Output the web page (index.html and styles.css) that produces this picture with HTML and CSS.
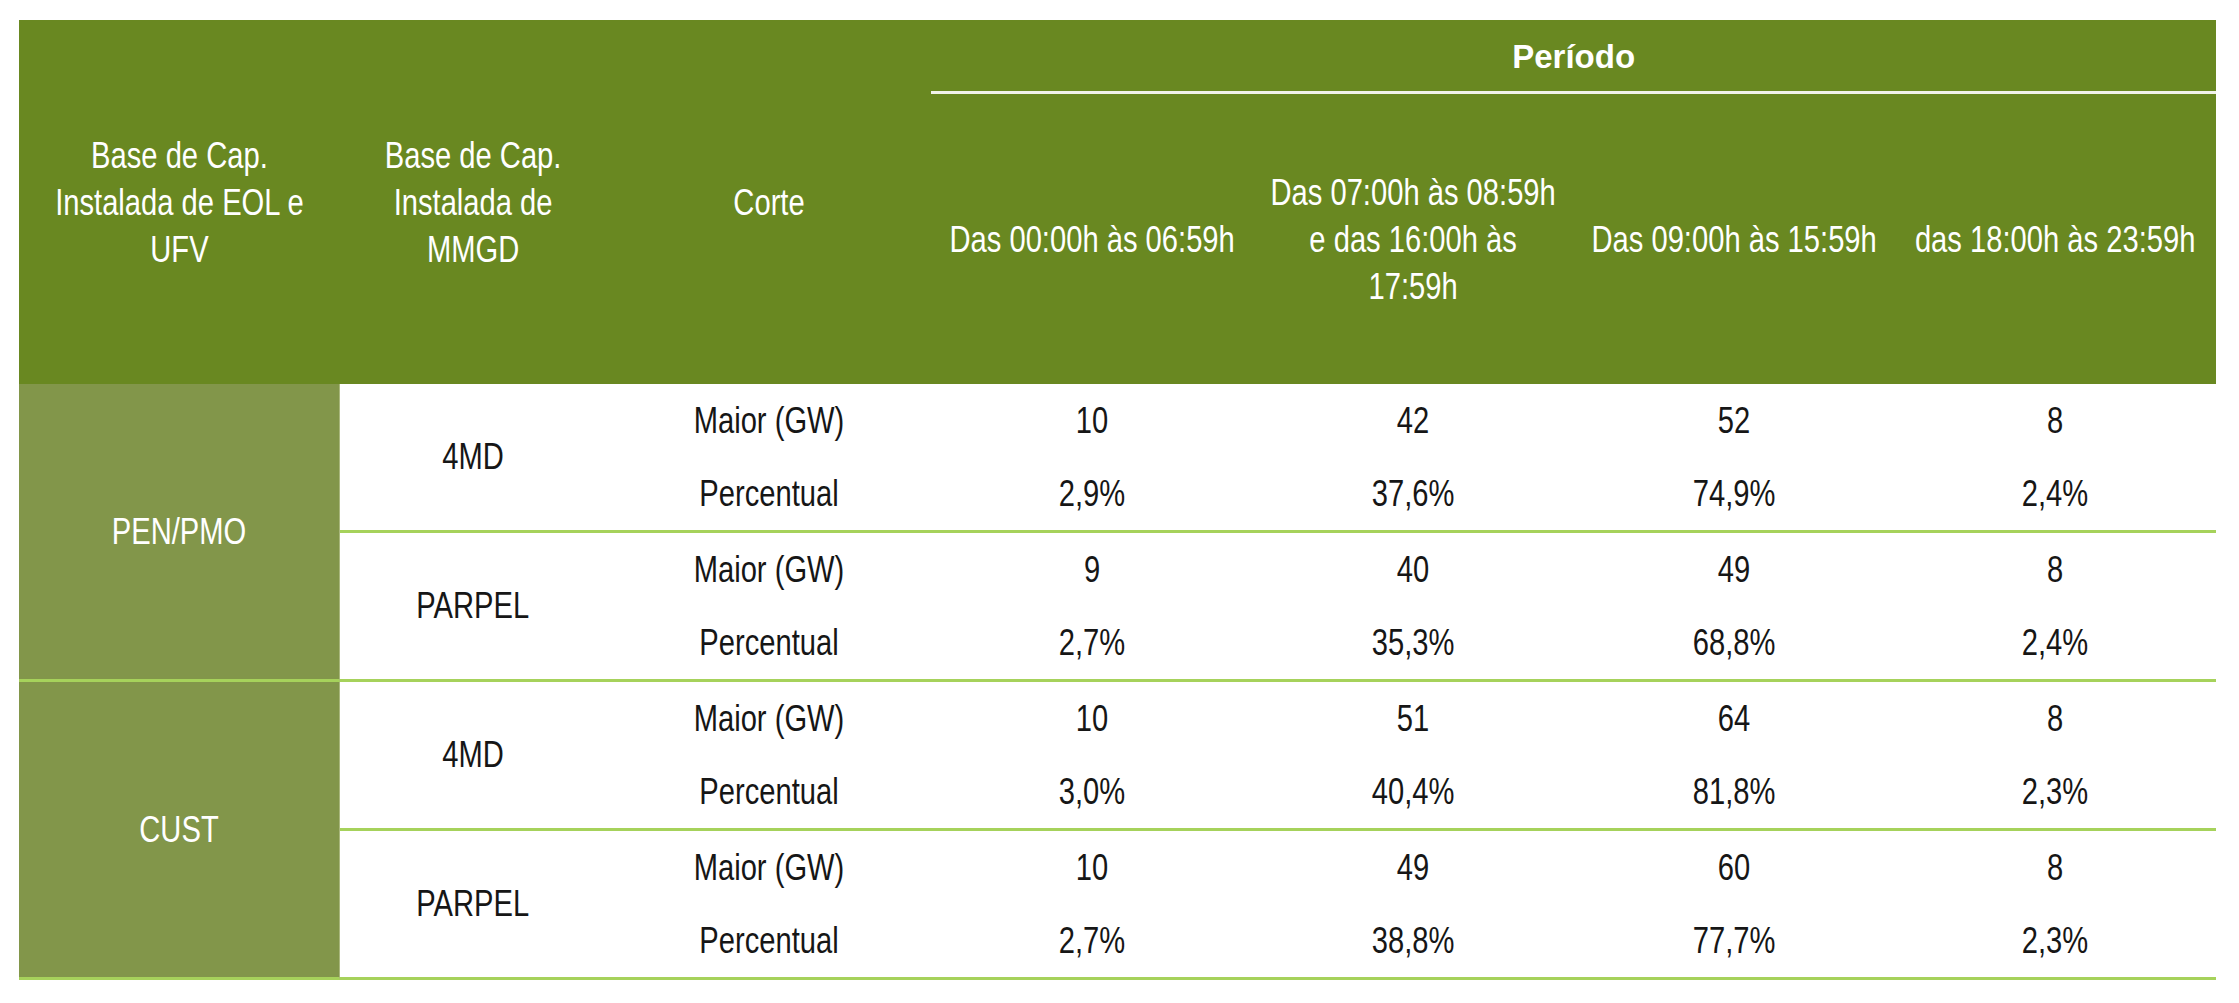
FILE: index.html
```html
<!DOCTYPE html>
<html lang="pt-BR">
<head>
<meta charset="utf-8">
<title>Corte por período</title>
<link rel="stylesheet" href="styles.css">
</head>
<body>
<table class="tbl">
  <colgroup>
    <col class="col-base">
    <col class="col-mmgd">
    <col class="col-corte">
    <col class="col-per">
    <col class="col-per">
    <col class="col-per">
    <col class="col-per">
  </colgroup>
  <thead>
    <tr>
      <th rowspan="2" class="h-main"><span class="cx">Base de Cap.<br>Instalada de EOL e<br>UFV</span></th>
      <th rowspan="2" class="h-main"><span class="cx">Base de Cap.<br>Instalada de<br>MMGD</span></th>
      <th rowspan="2" class="h-main"><span class="cx">Corte</span></th>
      <th colspan="4" class="h-periodo">Período</th>
    </tr>
    <tr>
      <th class="h-sub"><span class="cx">Das 00:00h às 06:59h</span></th>
      <th class="h-sub"><span class="cx">Das 07:00h às 08:59h<br>e das 16:00h às<br>17:59h</span></th>
      <th class="h-sub"><span class="cx">Das 09:00h às 15:59h</span></th>
      <th class="h-sub"><span class="cx">das 18:00h às 23:59h</span></th>
    </tr>
  </thead>
  <tbody>
    <tr>
      <td rowspan="4" class="grp grp-end"><span class="cx">PEN/PMO</span></td>
      <td rowspan="2" class="sub sep"><span class="cx">4MD</span></td>
      <td><span class="cx">Maior (GW)</span></td><td><span class="cx">10</span></td><td><span class="cx">42</span></td><td><span class="cx">52</span></td><td><span class="cx">8</span></td>
    </tr>
    <tr class="sep">
      <td><span class="cx">Percentual</span></td><td><span class="cx">2,9%</span></td><td><span class="cx">37,6%</span></td><td><span class="cx">74,9%</span></td><td><span class="cx">2,4%</span></td>
    </tr>
    <tr>
      <td rowspan="2" class="sub sep"><span class="cx">PARPEL</span></td>
      <td><span class="cx">Maior (GW)</span></td><td><span class="cx">9</span></td><td><span class="cx">40</span></td><td><span class="cx">49</span></td><td><span class="cx">8</span></td>
    </tr>
    <tr class="sep">
      <td><span class="cx">Percentual</span></td><td><span class="cx">2,7%</span></td><td><span class="cx">35,3%</span></td><td><span class="cx">68,8%</span></td><td><span class="cx">2,4%</span></td>
    </tr>
    <tr>
      <td rowspan="4" class="grp grp-end"><span class="cx">CUST</span></td>
      <td rowspan="2" class="sub sep"><span class="cx">4MD</span></td>
      <td><span class="cx">Maior (GW)</span></td><td><span class="cx">10</span></td><td><span class="cx">51</span></td><td><span class="cx">64</span></td><td><span class="cx">8</span></td>
    </tr>
    <tr class="sep">
      <td><span class="cx">Percentual</span></td><td><span class="cx">3,0%</span></td><td><span class="cx">40,4%</span></td><td><span class="cx">81,8%</span></td><td><span class="cx">2,3%</span></td>
    </tr>
    <tr>
      <td rowspan="2" class="sub sep"><span class="cx">PARPEL</span></td>
      <td><span class="cx">Maior (GW)</span></td><td><span class="cx">10</span></td><td><span class="cx">49</span></td><td><span class="cx">60</span></td><td><span class="cx">8</span></td>
    </tr>
    <tr class="sep">
      <td><span class="cx">Percentual</span></td><td><span class="cx">2,7%</span></td><td><span class="cx">38,8%</span></td><td><span class="cx">77,7%</span></td><td><span class="cx">2,3%</span></td>
    </tr>
  </tbody>
</table>
</body>
</html>
```

FILE: styles.css
```css
html, body {
  margin: 0;
  padding: 0;
  background: #ffffff;
}

body {
  padding: 20px 0 0 19px;
  font-family: "Liberation Sans", Arial, sans-serif;
  font-size: 36px;
  color: #161616;
}

/* condensed rendering of the narrow typeface used in the source table */
.cx {
  display: inline-block;
  white-space: nowrap;
  margin: 0 -60px;
  transform: scaleX(0.81);
  transform-origin: 50% 50%;
}

.tbl {
  border-collapse: separate;
  border-spacing: 0;
  table-layout: fixed;
  width: 2197px;
}

.col-base { width: 321px; }
.col-mmgd { width: 266px; }
.col-corte { width: 325px; }
.col-per { width: 321px; }

.tbl th {
  background: #698821;
  color: #ffffff;
  font-weight: normal;
  text-align: center;
  vertical-align: middle;
  padding: 0;
  line-height: 47px;
}

.tbl th.h-periodo {
  box-sizing: border-box;
  height: 74px;
  padding-top: 3px;
  font-weight: bold;
  font-size: 33px;
  line-height: 40px;
  border-bottom: 3px solid #f1f3ea;
}

.h-sub {
  box-sizing: border-box;
  height: 290px;
}

.tbl td {
  box-sizing: border-box;
  height: 74px;
  padding: 0;
  text-align: center;
  vertical-align: middle;
  line-height: 40px;
}

.tbl td.grp {
  background: #82964a;
  color: #ffffff;
  border-right: 1px solid #a9b77d;
}

.grp-end {
  border-bottom: 3px solid #a6d25b;
}

.sep td,
td.sep {
  border-bottom: 3px solid #a6d25b;
}

.sep td {
  height: 75px;
}
```
